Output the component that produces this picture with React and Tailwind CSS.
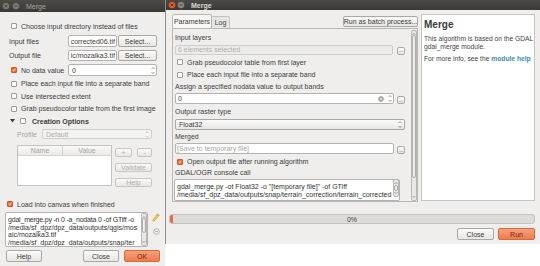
import React from "react";

const Btn = ({ className = "", children, disabled, orange }) => (
  <div
    className={
      "flex items-center justify-center whitespace-nowrap rounded-[2px] border " +
      (orange
        ? "border-[#d9683b] bg-linear-to-b from-[#f7a07c] to-[#ef7a4a] text-[#6b2a12] "
        : "border-[#aaa8a4] bg-linear-to-b from-[#fbfbfa] to-[#e7e6e4] ") +
      (disabled ? "text-[#b0aeab] border-[#c8c6c3] " : orange ? "" : "text-[#3a3a3a] ") +
      className
    }
  >
    {children}
  </div>
);

const Check = ({ checked, disabled, className = "" }) =>
  checked ? (
    <div className={"w-[6px] h-[6px] rounded-[1px] bg-[#e8703c] border border-[#c95a2b] flex items-center justify-center shrink-0 " + className}>
      <svg width="6" height="6" viewBox="0 0 6 6">
        <path d="M1 3 L2.4 4.4 L5 1.2" stroke="#fff" strokeWidth="1.1" fill="none" />
      </svg>
    </div>
  ) : (
    <div
      className={
        "w-[6px] h-[6px] rounded-[1px] border shrink-0 " +
        (disabled ? "border-[#c9c7c4] bg-[#f4f4f3] " : "border-[#9e9c98] bg-white ") +
        className
      }
    />
  );

const Spin = ({ color = "#6d6b67" }) => (
  <svg width="4" height="9" viewBox="0 0 4 9">
    <path d="M0.5 3 L2 1.5 L3.5 3" stroke={color} strokeWidth="0.7" fill="none" />
    <path d="M0.5 6 L2 7.5 L3.5 6" stroke={color} strokeWidth="0.7" fill="none" />
  </svg>
);

const WinBtn = ({ color, glyph = "#3a3935" }) => (
  <svg width="8" height="8" viewBox="0 0 8 8">
    <circle cx="4" cy="4" r="3.6" fill={color} stroke="#2a2926" strokeWidth="0.4" />
    {glyph && <path d="M2.6 2.6 L5.4 5.4 M5.4 2.6 L2.6 5.4" stroke={glyph} strokeWidth="0.8" />}
  </svg>
);

const MinBtn = ({ color }) => (
  <svg width="8" height="8" viewBox="0 0 8 8">
    <circle cx="4" cy="4" r="3.6" fill={color} stroke="#2a2926" strokeWidth="0.4" />
    <path d="M2.4 4 L5.6 4" stroke="#3a3935" strokeWidth="0.8" />
  </svg>
);

const VScroll = ({ className = "", thumbTop = 2, thumbBottom = 2 }) => (
  <div className={"relative w-[6px] border border-[#b9b7b3] rounded-[2px] bg-[#e9e8e6] flex flex-col items-center justify-between " + className}>
    <svg width="4" height="4" viewBox="0 0 4 4" className="mt-[1px]">
      <path d="M0.5 3 L2 1.5 L3.5 3" stroke="#6d6b67" strokeWidth="0.6" fill="none" />
    </svg>
    <svg width="4" height="4" viewBox="0 0 4 4" className="mb-[1px]">
      <path d="M0.5 1 L2 2.5 L3.5 1" stroke="#6d6b67" strokeWidth="0.6" fill="none" />
    </svg>
    <div
      className="absolute left-[0px] right-[0px] rounded-[2px] border border-[#b0aeaa] bg-linear-to-r from-[#f6f6f5] to-[#e3e2e0]"
      style={{ top: thumbTop, bottom: thumbBottom }}
    />
  </div>
);

export default function App() {
  return (
    <div className="relative w-[540px] h-[266px] overflow-hidden bg-white text-[7px] leading-none text-[#3c3c3c] font-['Liberation_Sans',Arial,sans-serif]">
      {/* LEFT WINDOW */}
      <div className="absolute left-0 top-0 w-[165px] h-[266px] bg-[#efeeec] flex flex-col">
        <div className="h-[12px] shrink-0 bg-linear-to-b from-[#4b4a46] to-[#3a3935] flex items-center pl-[2px] gap-[2px]">
          <WinBtn color="#7e7c77" />
          <MinBtn color="#7e7c77" />
          <span className="ml-[4px] text-[#a9a6a0]">Merge</span>
        </div>

        {/* row 1 */}
        <div className="mt-[8px] h-[12px] flex items-center pl-[11px] gap-[4px]">
          <Check />
          <span>Choose input directory instead of files</span>
        </div>
        {/* row 2 */}
        <div className="mt-[3px] h-[12px] flex items-center">
          <span className="pl-[9px] w-[68px]">Input files</span>
          <div className="w-[49px] h-[12px] bg-white border border-[#b5b3af] rounded-[2px] overflow-hidden flex items-center justify-end pr-[1px] whitespace-nowrap">corrected06.tif</div>
          <Btn className="ml-[1px] w-[39px] h-[12px]">Select...</Btn>
        </div>
        {/* row 3 */}
        <div className="mt-[3px] h-[11px] flex items-center">
          <span className="pl-[9px] w-[68px]">Output file</span>
          <div className="w-[49px] h-[11px] bg-white border border-[#b5b3af] rounded-[2px] overflow-hidden flex items-center justify-end pr-[1px] whitespace-nowrap">ic/mozaika3.tif</div>
          <Btn className="ml-[1px] w-[39px] h-[11px]">Select...</Btn>
        </div>
        {/* row 4 */}
        <div className="mt-[3px] h-[12px] flex items-center">
          <div className="pl-[11px] w-[68px] flex items-center gap-[4px]">
            <Check checked />
            <span>No data value</span>
          </div>
          <div className="w-[89px] h-[12px] bg-white border border-[#b5b3af] rounded-[2px] flex items-center justify-between pl-[3px] pr-[1px]">
            <span>0</span>
            <Spin />
          </div>
        </div>
        {/* rows 5-8 */}
        <div className="mt-[1px] h-[13px] flex items-center pl-[11px] gap-[4px]">
          <Check />
          <span>Place each input file into a separate band</span>
        </div>
        <div className="h-[12px] flex items-center pl-[11px] gap-[4px]">
          <Check />
          <span>Use intersected extent</span>
        </div>
        <div className="h-[13px] flex items-center pl-[11px] gap-[4px]">
          <Check />
          <span>Grab pseudocolor table from the first image</span>
        </div>
        <div className="h-[12px] flex items-center pl-[10px]">
          <svg width="5" height="4" viewBox="0 0 5 4">
            <path d="M0 0 L5 0 L2.5 3.5 Z" fill="#3c3c3c" />
          </svg>
          <Check className="ml-[5px]" />
          <span className="ml-[6px] font-bold">Creation Options</span>
        </div>
        {/* profile */}
        <div className="mt-[2px] h-[10px] flex items-center">
          <span className="pl-[17px] w-[42px] text-[#a8a6a2]">Profile</span>
          <div className="w-[110px] h-[10px] border border-[#cfcdca] rounded-[2px] bg-[#f3f3f2] flex items-center justify-between pl-[3px] pr-[2px] text-[#aeaca8]">
            <span>Default</span>
            <Spin color="#b5b3af" />
          </div>
        </div>
        {/* table */}
        <div className="mt-[6px] h-[42px] flex">
          <div className="ml-[17px] w-[95px] h-[41px] bg-white border border-[#c6c4c1] flex flex-col">
            <div className="h-[10px] flex border-b border-[#d4d2cf] bg-linear-to-b from-[#f8f8f7] to-[#ebeae8] text-[#a5a3a0]">
              <div className="w-[45px] flex items-center justify-center border-r border-[#d4d2cf]">Name</div>
              <div className="flex-1 flex items-center justify-center">Value</div>
            </div>
          </div>
          <div className="ml-[3px] w-[37px] flex flex-col">
            <div className="mt-[3px] flex justify-between">
              <Btn disabled className="w-[17px] h-[9px]">+</Btn>
              <Btn disabled className="w-[15px] h-[9px]">-</Btn>
            </div>
            <Btn disabled className="mt-[6px] h-[9px]">Validate</Btn>
            <Btn disabled className="mt-[6px] h-[9px]">Help</Btn>
          </div>
        </div>
        {/* load into canvas */}
        <div className="mt-[11px] h-[12px] flex items-center pl-[7px] gap-[4px]">
          <Check checked />
          <span>Load into canvas when finished</span>
        </div>
        {/* textarea */}
        <div className="mt-[2px] h-[35px] flex">
          <div className="ml-[5px] w-[143px] h-[35px] bg-white border border-[#b5b3af] rounded-[2px] flex overflow-hidden">
            <div className="flex-1 pl-[2px] pt-[3px] leading-[7.7px] whitespace-nowrap overflow-hidden text-[#333]">
              <div className="tracking-[-0.2px]">gdal_merge.py -n 0 -a_nodata 0 -of GTiff -o</div>
              <div>/media/sf_dpz/dpz_data/outputs/qgis/mos</div>
              <div>aic/mozaika3.tif</div>
              <div>/media/sf_dpz/dpz_data/outputs/snap/ter</div>
            </div>
            <VScroll className="h-[33px] mr-[0px]" thumbTop={4} thumbBottom={12} />
          </div>
          <div className="ml-[4px] flex flex-col items-center w-[8px]">
            <svg width="8" height="9" viewBox="0 0 8 9" className="mt-[1px]">
              <path d="M5.5 0.8 L7.2 2.5 L2.8 7.4 L0.8 8.2 L1.4 6.2 Z" fill="#f2cf4a" stroke="#b8912a" strokeWidth="0.5" />
              <path d="M5.5 0.8 L7.2 2.5 L6.4 3.3 L4.7 1.6 Z" fill="#e9a06e" />
            </svg>
            <svg width="7" height="7" viewBox="0 0 7 7" className="mt-[6px]">
              <circle cx="3.5" cy="3.5" r="2.8" fill="#f4f4f3" stroke="#8d8b87" strokeWidth="0.6" />
              <path d="M2 3.5 L5 3.5" stroke="#8d8b87" strokeWidth="0.6" />
            </svg>
          </div>
        </div>
        {/* buttons */}
        <div className="mt-[3px] h-[12px] flex">
          <Btn className="ml-[6px] w-[36px] h-[12px]">Help</Btn>
          <Btn className="ml-[41px] w-[36px] h-[12px]">Close</Btn>
          <Btn orange className="ml-[5px] w-[36px] h-[12px]">OK</Btn>
        </div>
      </div>

      {/* RIGHT WINDOW */}
      <div className="absolute left-[165px] top-0 w-[375px] h-[244px] bg-[#efeeec] border-l border-[#8f8d89] flex flex-col">
        <div className="h-[10px] shrink-0 bg-linear-to-b from-[#4b4a46] to-[#3a3935] flex items-center pl-[2px] gap-[1px]">
          <WinBtn color="#e5612f" glyph="#5a1e0a" />
          <MinBtn color="#8a8883" />
          <span className="ml-[5px] font-bold text-[#dfdbd2]">Merge</span>
        </div>
        <div className="flex pl-[6px] pt-[4px]">
          {/* left column */}
          <div className="w-[246px] flex flex-col">
            <div className="h-[14px] flex items-end relative">
              <div className="w-[40px] h-[14px] border border-b-0 border-[#b9b7b3] rounded-t-[2px] bg-[#f7f7f6] flex items-center justify-center">Parameters</div>
              <div className="w-[18px] h-[12px] border border-l-0 border-b-0 border-[#c4c2bf] rounded-tr-[2px] bg-[#e6e5e3] flex items-center justify-center">Log</div>
              <Btn className="ml-auto mb-[1px] w-[75px] h-[11px]">Run as batch process...</Btn>
            </div>
            <div className="h-[174px] border border-[#b9b7b3] flex overflow-hidden">
              <div className="flex-1 flex flex-col pl-[2px] overflow-hidden">
                <div className="mt-[4px] h-[10px] flex items-center">Input layers</div>
                <div className="mt-[2px] h-[10px] flex items-center">
                  <div className="w-[218px] h-[10px] border border-[#cfcdca] rounded-[2px] bg-[#ecebe9] text-[#b3b1ad] flex items-center pl-[2px]">6 elements selected</div>
                  <Btn className="ml-[4px] mt-[2px] w-[8px] h-[8px] text-[5px]">...</Btn>
                </div>
                <div className="mt-[3px] h-[10px] flex items-center pl-[2px] gap-[4px]">
                  <Check />
                  <span>Grab pseudocolor table from first layer</span>
                </div>
                <div className="mt-[3px] h-[10px] flex items-center pl-[2px] gap-[4px]">
                  <Check />
                  <span>Place each input file into a separate band</span>
                </div>
                <div className="mt-[2px] h-[10px] flex items-center">Assign a specified nodata value to output bands</div>
                <div className="mt-[2px] h-[11px] flex items-center">
                  <div className="w-[219px] h-[11px] border border-[#b5b3af] rounded-[2px] bg-white flex items-center pl-[2px] pr-[1px]">
                    <span>0</span>
                    <svg width="6" height="6" viewBox="0 0 6 6" className="ml-auto mr-[4px]">
                      <circle cx="3" cy="3" r="2.7" fill="#9d9b97" />
                      <path d="M1.9 1.9 L4.1 4.1 M4.1 1.9 L1.9 4.1" stroke="#fff" strokeWidth="0.7" />
                    </svg>
                    <Spin />
                  </div>
                  <Btn className="ml-[3px] mt-[3px] w-[8px] h-[8px] text-[5px]">...</Btn>
                </div>
                <div className="mt-[3px] h-[10px] flex items-center">Output raster type</div>
                <div className="mt-[2px] h-[11px] flex items-center">
                  <Btn className="w-[230px] h-[11px] !justify-between pl-[3px] pr-[2px]">
                    <span>Float32</span>
                    <Spin />
                  </Btn>
                </div>
                <div className="mt-[2px] h-[10px] flex items-center">Merged</div>
                <div className="mt-[2px] h-[11px] flex items-center">
                  <div className="w-[219px] h-[11px] border border-[#b5b3af] rounded-[2px] bg-white flex items-center pl-[1px] text-[#a9a7a3]">[Save to temporary file]</div>
                  <Btn className="ml-[3px] mt-[3px] w-[8px] h-[8px] text-[5px]">...</Btn>
                </div>
                <div className="mt-[3px] h-[10px] flex items-center pl-[2px] gap-[4px]">
                  <Check checked />
                  <span>Open output file after running algorithm</span>
                </div>
                <div className="mt-[1px] h-[10px] flex items-center">GDAL/OGR console call</div>
                <div className="mt-[2px] h-[22px] shrink-0 flex">
                  <div className="ml-[-1px] w-[226px] h-[22px] border border-[#b5b3af] rounded-[2px] bg-white pl-[2px] pt-[3px] leading-[8px] whitespace-nowrap overflow-hidden text-[#333]">
                    <div>gdal_merge.py -ot Float32 -o "[temporary file]" -of GTiff</div>
                    <div>/media/sf_dpz_data/outputs/snap/terrain_correction/terrain_corrected</div>
                  </div>
                  <VScroll className="ml-[-7px] h-[18px]" thumbTop={5} thumbBottom={5} />
                </div>
              </div>
              <VScroll className="mt-[1px] mr-[0px] h-[171px]" thumbTop={4} thumbBottom={22} />
            </div>
          </div>
          {/* help panel */}
          <div className="ml-[3px] w-[114px] h-[187px] bg-white border border-[#c8c6c3] pl-[2px] pt-[5px] text-[6.7px] text-[#444]">
            <div className="text-[10px] font-bold text-[#3a3a3a] leading-none">Merge</div>
            <div className="mt-[5px] leading-[8px] whitespace-nowrap">
              This algorithm is based on the GDAL
              <br />
              gdal_merge module.
            </div>
            <div className="mt-[5px] whitespace-nowrap">
              For more info, see the <span className="font-bold text-[#3d8db5]">module help</span>
            </div>
          </div>
        </div>
        {/* progress */}
        <div className="mt-[12px] ml-[3px] w-[366px] h-[10px] rounded-[3px] border border-[#c4c2bf] bg-[#dcdbd9] relative flex items-center justify-center overflow-hidden">
          <div className="absolute left-0 top-0 bottom-0 w-[3px] bg-[#e5703f]" />
          <span>0%</span>
        </div>
        <div className="mt-[4px] h-[12px] flex">
          <Btn className="ml-[291px] w-[37px] h-[12px]">Close</Btn>
          <Btn orange className="ml-[4px] w-[37px] h-[12px]">Run</Btn>
        </div>
      </div>
    </div>
  );
}
